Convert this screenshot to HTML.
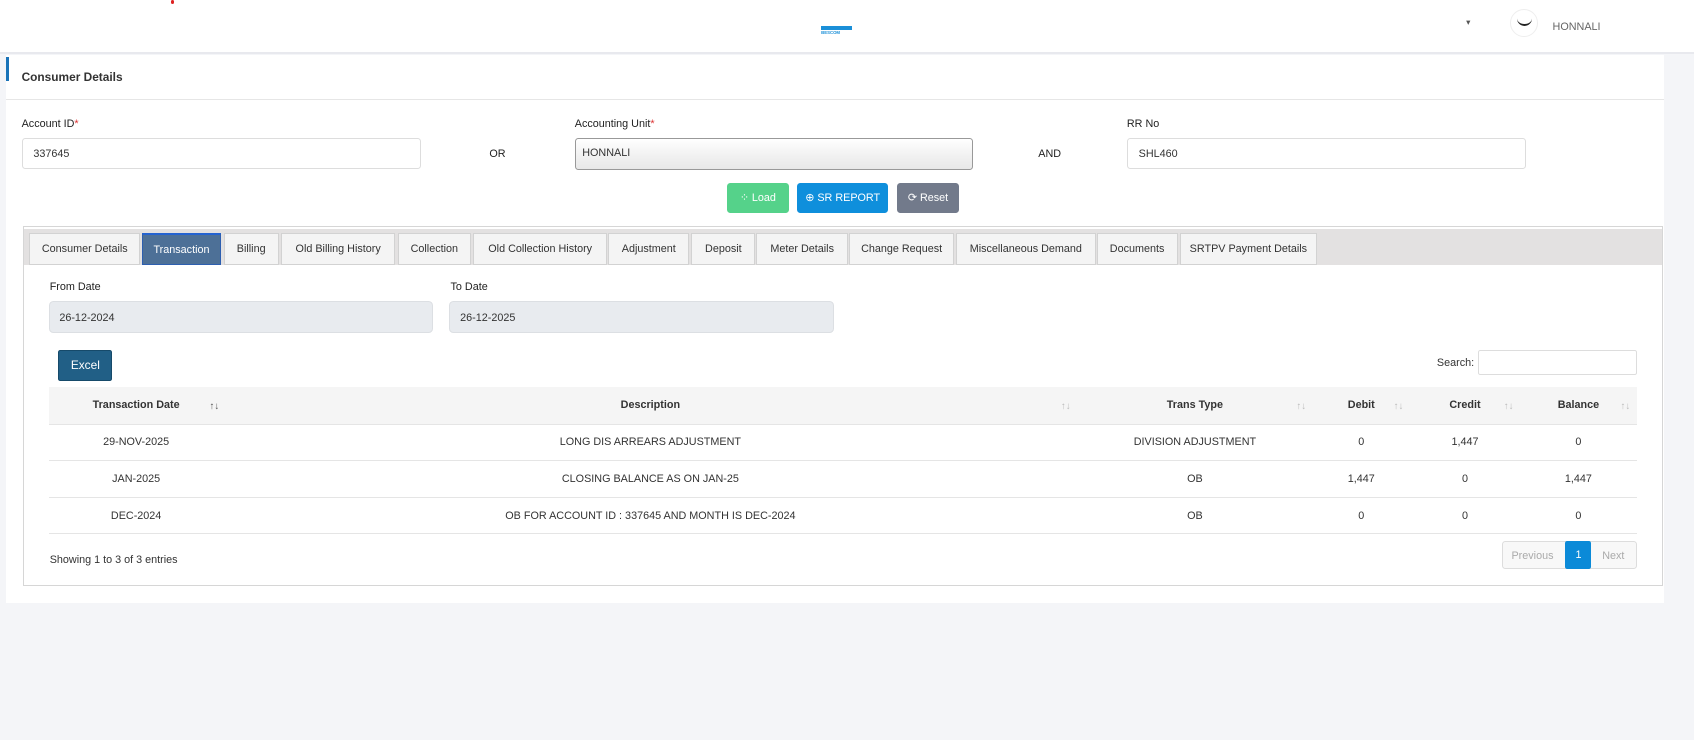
<!DOCTYPE html>
<html><head><meta charset="utf-8"><style>
html,body{margin:0;padding:0}
body{width:1568px;height:685px;zoom:1.0804;background:#f4f5f8;font-family:"Liberation Sans",sans-serif;font-size:10px;color:#333;position:relative;overflow:hidden}
.abs{position:absolute}
.hdr{left:0;top:0;width:1568px;height:48px;background:#fff;border-bottom:2px solid #e8e9ee}
.card{left:6px;top:51px;width:1534px;height:507px;background:#fff}
.title{left:6px;top:51px;width:1534px;height:41px;border-bottom:1px solid #e6e6e6}
.title .bar{position:absolute;left:0;top:2px;width:2px;height:22px;background:#1a73b8}
.title span{position:absolute;left:14px;top:14px;font-weight:bold;font-size:11px;color:#333}
.lbl{font-size:10px;color:#222}
.lbl b{color:#d33;font-weight:normal}
.inp{height:28px;border:1px solid #ddd;border-radius:3px;background:#fff;box-sizing:border-box;padding:8px 10px;font-size:10px}
.btn{height:28px;border-radius:3px;color:#fff;font-size:10px;line-height:28px;text-align:center}
.panel{left:21px;top:209px;width:1518px;height:333px;border:1px solid #d6d6d6;background:#fff;box-sizing:border-box}
.tabbar{left:22px;top:212px;width:1516px;height:33px;background:#e3e1e1}
.tab{position:absolute;top:216px;height:29px;background:#f4f4f4;border:1px solid #d2d2d2;box-sizing:border-box;font-size:10px;line-height:29px;text-align:center;color:#333;white-space:nowrap}
.tab.act{background:#4d7097;color:#fff;border-color:#2d5fb0;border-top:2px solid #2463d1}
.date{height:29px;background:#e8ebef;border:1px solid #dcdfe3;border-radius:4px;box-sizing:border-box;padding:9px 9px;font-size:10px;width:356px}
table{position:absolute;left:45px;top:358px;width:1470px;border-collapse:collapse;font-size:10px}
th,td{padding:0}
th{background:#f5f5f5;height:34px;font-weight:bold;color:#333;position:relative}
td{height:33px;text-align:center;border-top:1px solid #e5e5e5;color:#333}
tr:last-child td{border-bottom:1px solid #e5e5e5}
.ar{position:absolute;right:6px;top:13px;color:#bbb;font-size:9px;font-weight:normal}
</style></head><body>
<div class="abs hdr"></div>
<div class="abs" style="left:158px;top:0;width:3px;height:4px;background:#d22;border-radius:2px"></div>
<div class="abs" style="left:760px;top:24px;width:29px;height:4px;background:#1a8fd8"></div>
<div class="abs" style="left:760px;top:28px;font-size:4px;color:#1a8fd8;font-weight:bold">BESCOM</div>
<div class="abs" style="left:1357px;top:16px;font-size:8px;color:#555">▾</div>
<div class="abs" style="left:1398px;top:8px;width:26px;height:26px;border-radius:50%;border:1px solid #eee;box-sizing:border-box"></div>
<div class="abs" style="left:1404px;top:16px;width:14px;height:6px;border-bottom:2px solid #222;border-radius:0 0 8px 8px"></div>
<div class="abs" style="left:1437px;top:19px;font-size:10px;color:#666">HONNALI</div>

<div class="abs card"></div>
<div class="abs title"><div class="bar"></div><span>Consumer Details</span></div>

<div class="abs lbl" style="left:20px;top:109px">Account ID<b>*</b></div>
<div class="abs inp" style="left:20px;top:128px;width:370px">337645</div>
<div class="abs lbl" style="left:453px;top:137px">OR</div>
<div class="abs lbl" style="left:532px;top:109px">Accounting Unit<b>*</b></div>
<div class="abs inp" style="left:532px;top:128px;width:369px;height:29px;border-color:#999;background:linear-gradient(#fff,#f0f0f0 60%,#e8e8e8);padding:7px 6px">HONNALI</div>
<div class="abs lbl" style="left:961px;top:137px">AND</div>
<div class="abs lbl" style="left:1043px;top:109px">RR No</div>
<div class="abs inp" style="left:1043px;top:128px;width:369px">SHL460</div>

<div class="abs btn" style="left:673px;top:169px;width:57px;background:#55d28a">⁘ Load</div>
<div class="abs btn" style="left:738px;top:169px;width:84px;background:#0f8fdc">⊕ SR REPORT</div>
<div class="abs btn" style="left:830px;top:169px;width:58px;background:#727a8b">⟳ Reset</div>

<div class="abs panel"></div>
<div class="abs tabbar"></div>
<div class="tab" style="left:27px;width:103px">Consumer Details</div>
<div class="tab act" style="left:131px;width:74px">Transaction</div>
<div class="tab" style="left:207px;width:51px">Billing</div>
<div class="tab" style="left:260px;width:106px">Old Billing History</div>
<div class="tab" style="left:368px;width:68px">Collection</div>
<div class="tab" style="left:438px;width:124px">Old Collection History</div>
<div class="tab" style="left:563px;width:75px">Adjustment</div>
<div class="tab" style="left:640px;width:59px">Deposit</div>
<div class="tab" style="left:700px;width:85px">Meter Details</div>
<div class="tab" style="left:786px;width:97px">Change Request</div>
<div class="tab" style="left:885px;width:129px">Miscellaneous Demand</div>
<div class="tab" style="left:1015px;width:75px">Documents</div>
<div class="tab" style="left:1092px;width:127px">SRTPV Payment Details</div>

<div class="abs lbl" style="left:46px;top:260px">From Date</div>
<div class="abs date" style="left:45px;top:279px">26-12-2024</div>
<div class="abs lbl" style="left:417px;top:260px">To Date</div>
<div class="abs date" style="left:416px;top:279px">26-12-2025</div>

<div class="abs" style="left:54px;top:324px;width:50px;height:29px;background:#215f86;border:1px solid #164a6a;box-sizing:border-box;border-radius:2px;color:#fff;font-size:11px;line-height:27px;text-align:center">Excel</div>
<div class="abs" style="left:1330px;top:330px;font-size:10px">Search:</div>
<div class="abs" style="left:1368px;top:324px;width:147px;height:23px;border:1px solid #ddd;box-sizing:border-box;border-radius:2px"></div>

<table>
<tr><th style="width:162px">Transaction Date<span class="ar" style="color:#555;right:4px">↑↓</span></th><th style="width:790px">Description<span class="ar">↑↓</span></th><th style="width:218px">Trans Type<span class="ar">↑↓</span></th><th style="width:90px">Debit<span class="ar">↑↓</span></th><th style="width:102px">Credit<span class="ar">↑↓</span></th><th>Balance<span class="ar">↑↓</span></th></tr>
<tr><td>29-NOV-2025</td><td>LONG DIS ARREARS ADJUSTMENT</td><td>DIVISION ADJUSTMENT</td><td>0</td><td>1,447</td><td>0</td></tr>
<tr><td>JAN-2025</td><td>CLOSING BALANCE AS ON JAN-25</td><td>OB</td><td>1,447</td><td>0</td><td>1,447</td></tr>
<tr><td>DEC-2024</td><td>OB FOR ACCOUNT ID : 337645 AND MONTH IS DEC-2024</td><td>OB</td><td>0</td><td>0</td><td>0</td></tr>
</table>

<div class="abs" style="left:46px;top:513px;font-size:10px">Showing 1 to 3 of 3 entries</div>
<div class="abs" style="left:1390px;top:501px;width:125px;height:26px;border:1px solid #ddd;border-radius:3px;box-sizing:border-box;background:#f8f8f8"></div>
<div class="abs" style="left:1399px;top:509px;font-size:10px;color:#aaa">Previous</div>
<div class="abs" style="left:1449px;top:501px;width:24px;height:26px;background:#0b8ad8;border-radius:2px;color:#fff;text-align:center;line-height:26px;font-size:10px">1</div>
<div class="abs" style="left:1483px;top:509px;font-size:10px;color:#aaa">Next</div>
</body></html>
